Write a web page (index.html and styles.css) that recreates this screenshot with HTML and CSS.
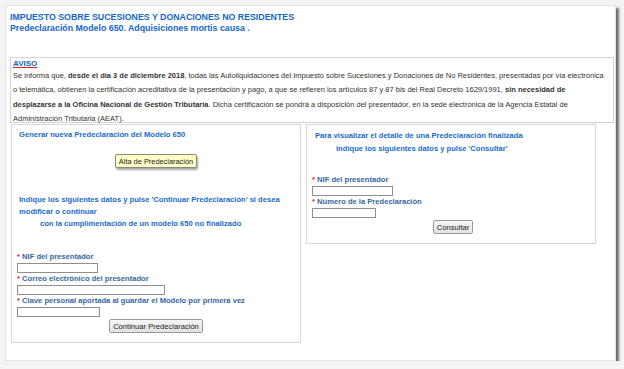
FILE: index.html
```html
<!DOCTYPE html>
<html lang="es">
<head>
  <meta charset="UTF-8">
  <title>Predeclaración Modelo 650</title>
  <link rel="stylesheet" href="styles.css">
</head>
<body>

  <div class="window">
    <h1 class="title">IMPUESTO SOBRE SUCESIONES Y DONACIONES NO RESIDENTES<br>Predeclaración Modelo 650. Adquisiciones mortis causa .</h1>

    <div class="aviso">
      <div class="aviso-title">AVISO</div>
      <p>Se informa que, <strong>desde el día 3 de diciembre 2018</strong>, todas las Autoliquidaciones del Impuesto sobre Sucesiones y Donaciones de No Residentes, presentadas por vía electrónica<br>o telemática, obtienen la certificación acreditativa de la presentación y pago, a que se refieren los artículos 87 y 87 bis del Real Decreto 1629/1991, <strong>sin necesidad de<br>desplazarse a la Oficina Nacional de Gestión Tributaria</strong>. Dicha certificación se pondrá a disposición del presentador, en la sede electrónica de la Agencia Estatal de<br>Administración Tributaria (AEAT).</p>
    </div>

    <div class="panels">
      <div class="panel panel-left">
        <h2 class="panel-title">Generar nueva Predeclaración del Modelo 650</h2>
        <button type="button" class="btn-alta">Alta de Predeclaración</button>

        <p class="info">Indique los siguientes datos y pulse 'Continuar Predeclaración' si desea<br>modificar o continuar<br><span class="indent">con la cumplimentación de un modelo 650 no finalizado</span></p>

        <form class="datos">
          <label for="nif1"><span class="req">*</span> NIF del presentador</label>
          <input type="text" id="nif1" class="w-nif">
          <label for="correo"><span class="req">*</span> Correo electrónico del presentador</label>
          <input type="text" id="correo" class="w-correo">
          <label for="clave"><span class="req">*</span> Clave personal aportada al guardar el Modelo por primera vez</label>
          <input type="password" id="clave" class="w-clave">
          <button type="button" class="btn">Continuar Predeclaración</button>
        </form>
      </div>

      <div class="panel panel-right">
        <p class="panel-title">Para visualizar el detalle de una Predeclaración finalizada<br><span class="indent">indique los siguientes datos y pulse 'Consultar'</span></p>

        <form class="datos">
          <label for="nif2"><span class="req">*</span> NIF del presentador</label>
          <input type="text" id="nif2" class="w-nif">
          <label for="numero"><span class="req">*</span> Número de la Predeclaración</label>
          <input type="text" id="numero" class="w-numero">
          <button type="button" class="btn btn-consultar">Consultar</button>
        </form>
      </div>
    </div>
  </div>

</body>
</html>
```

FILE: styles.css
```css
body {
  margin: 0;
  padding: 5px 0 0 5px;
  background-color: #f4f4f4;
  font-family: "Liberation Sans", Arial, sans-serif;
  color: #333;
}

.window {
  width: 611px;
  height: 356px;
  box-sizing: border-box;
  background: #fff;
  border: 1px solid #e2e2e2;
  box-shadow: 3px 3px 2px rgba(0, 0, 0, 0.55);
}

.title {
  margin: 6px 0 0 4px;
  font-size: 8.8px;
  line-height: 11px;
  font-weight: bold;
  color: #1466c8;
}

.aviso {
  height: 66px;
  box-sizing: border-box;
  margin: 23px 1px 0 4px;
  padding: 1px 2px 0 2px;
  border: 1px solid #d4d4d4;
}

.aviso-title {
  width: fit-content;
  font-size: 8px;
  line-height: 10px;
  font-weight: bold;
  color: #1466c8;
  text-decoration: underline;
  text-decoration-color: #d62020;
  text-underline-offset: 1px;
}

.aviso p {
  margin: 0;
  font-size: 7.5px;
  line-height: 14.3px;
  color: #333;
  white-space: nowrap;
}

.panels {
  display: flex;
  align-items: flex-start;
  gap: 5px;
  margin: 1px 0 0 5px;
}

.panel {
  width: 290px;
  box-sizing: border-box;
  border: 1px solid #d8d8d8;
  padding: 3px 5px 9px 5px;
}

.panel-title {
  margin: 0 0 0 2px;
  font-size: 7.6px;
  line-height: 13px;
  font-weight: bold;
  color: #1a6dcc;
}

.panel-right .panel-title {
  margin: 1px 0 0 3px;
}

.indent {
  padding-left: 21px;
}

.btn-alta {
  display: block;
  margin: 13px auto 0;
  height: 14px;
  padding: 0 3px;
  font-family: "Liberation Sans", Arial, sans-serif;
  font-size: 7.4px;
  color: #222;
  background: #ffffc6;
  border: 1px solid #8a8a7a;
  border-radius: 2px;
  box-shadow: 1px 2px 2px rgba(0, 0, 0, 0.35);
}

.info {
  margin: 26px 0 0 2px;
  font-size: 7.6px;
  line-height: 12px;
  font-weight: bold;
  color: #1a6dcc;
}

.datos {
  margin-top: 21px;
}

.panel-right .datos {
  margin-top: 19px;
}

.datos label {
  display: block;
  font-size: 7.6px;
  line-height: 12px;
  font-weight: bold;
  color: #36689e;
}

.req {
  color: #e02020;
}

.datos input {
  display: block;
  height: 10px;
  box-sizing: border-box;
  padding: 0 2px;
  border: 1px solid #8f8f8f;
  background: #fff;
  font-size: 7px;
}

.w-nif {
  width: 81px;
}

.w-correo {
  width: 148px;
}

.w-clave {
  width: 83px;
}

.w-numero {
  width: 64px;
}

.btn {
  display: block;
  margin: 2px auto 0;
  height: 14px;
  padding: 0 3px;
  font-family: "Liberation Sans", Arial, sans-serif;
  font-size: 7.6px;
  color: #222;
  background: linear-gradient(#f6f6f6, #e2e2e2);
  border: 1px solid #9a9a9a;
  border-radius: 2px;
}

.btn-consultar {
  position: relative;
  left: 2px;
}
```
